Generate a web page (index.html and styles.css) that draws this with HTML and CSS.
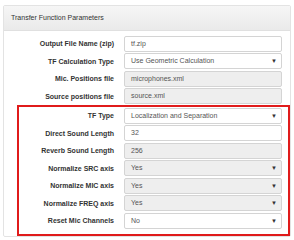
FILE: index.html
```html
<!DOCTYPE html>
<html lang="en">

<head>
    <meta charset="UTF-8">
    <meta name="viewport" content="width=device-width, initial-scale=1.0">
    <title>Transfer Function Parameters</title>
    <link rel="stylesheet" href="styles.css">
</head>

<body>
    <div class="panel">
        <div class="panel-heading">Transfer Function Parameters</div>
        <div class="panel-body">
            <div class="form-row">
                <label>Output File Name (zip)</label>
                <div class="field">tf.zip</div>
            </div>
            <div class="form-row">
                <label>TF Calculation Type</label>
                <div class="field select">Use Geometric Calculation</div>
            </div>
            <div class="form-row">
                <label>Mic. Positions file</label>
                <div class="field readonly">microphones.xml</div>
            </div>
            <div class="form-row">
                <label>Source positions file</label>
                <div class="field readonly">source.xml</div>
            </div>
            <div class="highlight">
                <div class="form-row">
                    <label>TF Type</label>
                    <div class="field select">Localization and Separation</div>
                </div>
                <div class="form-row">
                    <label>Direct Sound Length</label>
                    <div class="field">32</div>
                </div>
                <div class="form-row">
                    <label>Reverb Sound Length</label>
                    <div class="field readonly">256</div>
                </div>
                <div class="form-row">
                    <label>Normalize SRC axis</label>
                    <div class="field select readonly">Yes</div>
                </div>
                <div class="form-row">
                    <label>Normalize MIC axis</label>
                    <div class="field select readonly">Yes</div>
                </div>
                <div class="form-row">
                    <label>Normalize FREQ axis</label>
                    <div class="field select readonly">Yes</div>
                </div>
                <div class="form-row">
                    <label>Reset Mic Channels</label>
                    <div class="field select">No</div>
                </div>
            </div>
        </div>
    </div>
</body>

</html>
```

FILE: styles.css
```css
body {
    font-family: 'Liberation Sans', Arial, sans-serif;
    margin: 0;
    background: #fff;
    color: #333;
}

.panel {
    margin: 5px 0 0 3px;
    width: 286px;
    border: 1px solid #e3e3e3;
    border-radius: 2px;
    height: 230px;
}

.panel-heading {
    height: 24px;
    line-height: 24px;
    padding-left: 7px;
    font-size: 7px;
    color: #333;
    background: linear-gradient(to bottom, #f6f6f6, #eaeaea);
    border-bottom: 1px solid #e0e0e0;
}

.panel-body {
    padding-top: 4.5px;
}

.form-row {
    display: flex;
    align-items: center;
    margin: 0 8px 1.5px 0;
}

.form-row label {
    flex: 1;
    text-align: right;
    font-size: 7px;
    font-weight: bold;
    color: #333;
}

.field {
    position: relative;
    box-sizing: border-box;
    width: 158px;
    height: 16px;
    margin-left: 10px;
    padding-left: 6px;
    line-height: 14px;
    font-size: 7px;
    color: #555;
    background: #fff;
    border: 1px solid #d4d4d4;
    border-radius: 2px;
}

.field.readonly {
    background: #eee;
}

.field.select::after {
    content: "\25BC";
    position: absolute;
    right: 4px;
    top: 0;
    font-size: 6px;
    color: #333;
}

.highlight {
    margin: -1px 0 0 13px;
    padding: 1px 6px 4px 0;
    border: 2px solid #e01b1b;
}

.highlight .form-row {
    margin-right: 0;
}
```
